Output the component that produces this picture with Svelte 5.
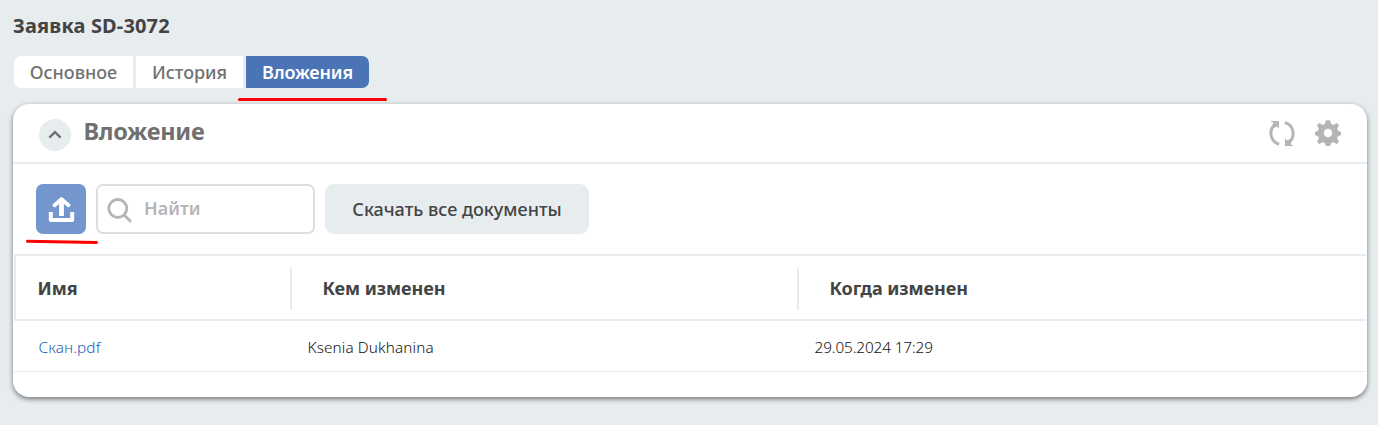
<script>
  const tabs = [
    { label: 'Основное', width: 119 },
    { label: 'История', width: 107 },
    { label: 'Вложения', width: 123, active: true }
  ];
  const files = [{ name: 'Скан.pdf', author: 'Ksenia Dukhanina', date: '29.05.2024 17:29' }];
</script>

<main>
  <h1>Заявка SD-3072</h1>
  <nav>
    {#each tabs as tab}
      <button class="tab" class:active={tab.active} style:width="{tab.width}px">{tab.label}</button>
    {/each}
  </nav>

  <section class="card">
    <header>
      <button class="collapse" aria-label="Свернуть">
        <svg width="32" height="32" viewBox="0 0 32 32"><path d="M10.300 18.600 16 13.200l5.700 5.400" fill="none" stroke="#707070" stroke-width="2.500" /></svg>
      </button>
      <h2>Вложение</h2>
      <svg class="refresh" width="28" height="28" viewBox="0 0 28 28">
        <g fill="none" stroke="#b5b5b5" stroke-width="3">
          <path d="M11.200 25.200C2 22.500 .5 11.300 6.400 5.800" />
          <path d="M16.800 3.600C26 6 27.500 17.200 21.600 22.900" />
        </g>
        <path d="M3.200 2H11v7.400L8.700 7.400 6 9 4.500 6.500 5.500 3.500 3.200 3zM24.800 27H17v-7.400l2.300 2 2.700-1.600 1.500 2.500-1 3 2.300.5z" fill="#b5b5b5" />
      </svg>
      <svg class="gear" width="26" height="26" viewBox="0 0 26 26">
        <path fill="#b5b5b5" stroke="#b5b5b5" stroke-width="1.200" stroke-linejoin="round" fill-rule="evenodd" d="M11.300.8h3.400l1 3.600 2.700 1.100 3.200-1.800 1.700 1.700-1.800 3.200 1.100 2.700 2.900 1v2.400l-2.900 1-1.100 2.700 1.800 3.200-1.700 1.700-3.200-1.800-2.700 1.100-1 2.900h-3.400l-1-2.900-2.700-1.100-3.200 1.800-1.700-1.700 1.800-3.200-1.100-2.700-2.900-1v-2.400l2.900-1 1.100-2.700-1.800-3.200 1.700-1.700 3.200 1.800 2.700-1.100zM13 8.200a4.800 4.800 0 1 0 0 9.600 4.800 4.800 0 0 0 0-9.600z" />
      </svg>
    </header>

    <div class="toolbar">
      <button class="upload" aria-label="Загрузить">
        <svg width="50" height="50" viewBox="0 0 50 50" fill="none" stroke="#fff" stroke-width="4">
          <path d="M25.500 32V16" stroke-width="4.800" />
          <path d="M18.500 21.200 25.500 15.200l7 6" stroke-linejoin="round" stroke-linecap="round" />
          <path d="M14.800 28v8H36.200V28" stroke-linejoin="round" />
        </svg>
      </button>
      <div class="search">
        <svg width="26" height="26" viewBox="0 0 26 26" fill="none" stroke="#b5b5b5" stroke-width="2.800"><circle cx="10.800" cy="10.500" r="9" /><path d="M17 17 23.200 23" stroke-linecap="round" /></svg>
        <span>Найти</span>
      </div>
      <button class="download">Скачать все документы</button>
    </div>

    <div class="thead">
      <b>Имя</b><b>Кем изменен</b><b>Когда изменен</b>
    </div>
    {#each files as file}
      <div class="row">
        <span class="link">{file.name}</span><span>{file.author}</span><span>{file.date}</span>
      </div>
    {/each}
  </section>

  <svg class="marks" width="1378" height="425" viewBox="0 0 1378 425" fill="none" stroke="#f00" stroke-width="3" stroke-linecap="round">
    <path d="M239.500 99.500H385.500" /><path d="M27.500 241.300 96.500 242.500" />
  </svg>
</main>

<style>
  :global(body) { background: #e7ecef; }
  main { position: relative; box-sizing: border-box; width: 1378px; height: 425px; padding: 12px 11px 0 13px; overflow: hidden; font-family: 'Noto Sans', 'Open Sans', sans-serif; color: #444; }
  button { border: 0; padding: 0; margin: 0; font-family: inherit; }
  svg { display: block; }
  h1 { margin: 0; font-size: 20px; line-height: 28px; font-weight: 700; letter-spacing: .15px; height: 44px; }
  nav { display: flex; gap: 3px; height: 32px; margin: 0 0 16px 1px; }
  .tab { background: #fff; color: #707070; font-size: 18px; line-height: 33px; font-weight: 500; white-space: nowrap; }
  .tab:first-child { border-radius: 7px 0 0 7px; }
  .tab:last-child { border-radius: 0 7px 7px 0; }
  .tab.active { background: #4b74b7; color: #fff; font-weight: 600; letter-spacing: -.15px; }
  .card { box-sizing: border-box; height: 293px; background: #fff; border-radius: 16px; box-shadow: 0 2px 5px rgba(0, 0, 0, .5); }
  header { display: flex; height: 58px; border-bottom: 2px solid #e7ecef; padding-left: 26px; }
  .collapse { margin-top: 15px; width: 32px; height: 32px; border-radius: 50%; background: #e7ecef; }
  h2 { margin: 10px auto 0 12.500px; font-size: 23.500px; line-height: 34px; font-weight: 700; letter-spacing: -.25px; color: #707070; }
  .refresh { margin: 15px 19px 0 0; }
  .gear { margin: 16px 26px 0 0; }
  .toolbar { display: flex; height: 70px; padding: 20px 23px 0; }
  .upload { width: 50px; height: 50px; border-radius: 7px; background: #7396cc; }
  .search { box-sizing: border-box; width: 219px; height: 50px; margin: 0 10px; border: 2px solid #d9dfe2; border-radius: 7px; display: flex; padding: 12px 0 0 9px; font-size: 18px; line-height: 21px; font-weight: 600; color: #b5b5b5; }
  .search span { margin-left: 11px; }
  .download { width: 264px; height: 50px; background: #e7ecef; border-radius: 9px; color: #444; font-size: 18px; line-height: 50px; font-weight: 500; white-space: nowrap; }
  .thead { box-sizing: border-box; display: grid; grid-template-columns: 274px 507px 1fr; height: 67px; margin: 0 1px; border: solid #e7ecef; border-width: 2px 0 2px 2px; padding-top: 11px; font-size: 18px; line-height: 43px; }
  .thead b { font-weight: 700; letter-spacing: -.05px; height: 43px; padding-left: 21.500px; }
  .thead b + b { border-left: 2px solid #e7ecef; padding-left: 30.500px; }
  .row { display: grid; grid-template-columns: 269px 507px 1fr; height: 50px; padding-left: 25.500px; border-bottom: 1px solid #ededed; margin-right: 1px; font-size: 15.300px; font-weight: 300; letter-spacing: .12px; line-height: 53px; color: #111; }
  .link { color: #225bb5; }
  .row span:last-child { letter-spacing: -.1px; }
  .marks { position: absolute; left: 0; top: 0; pointer-events: none; }
</style>
